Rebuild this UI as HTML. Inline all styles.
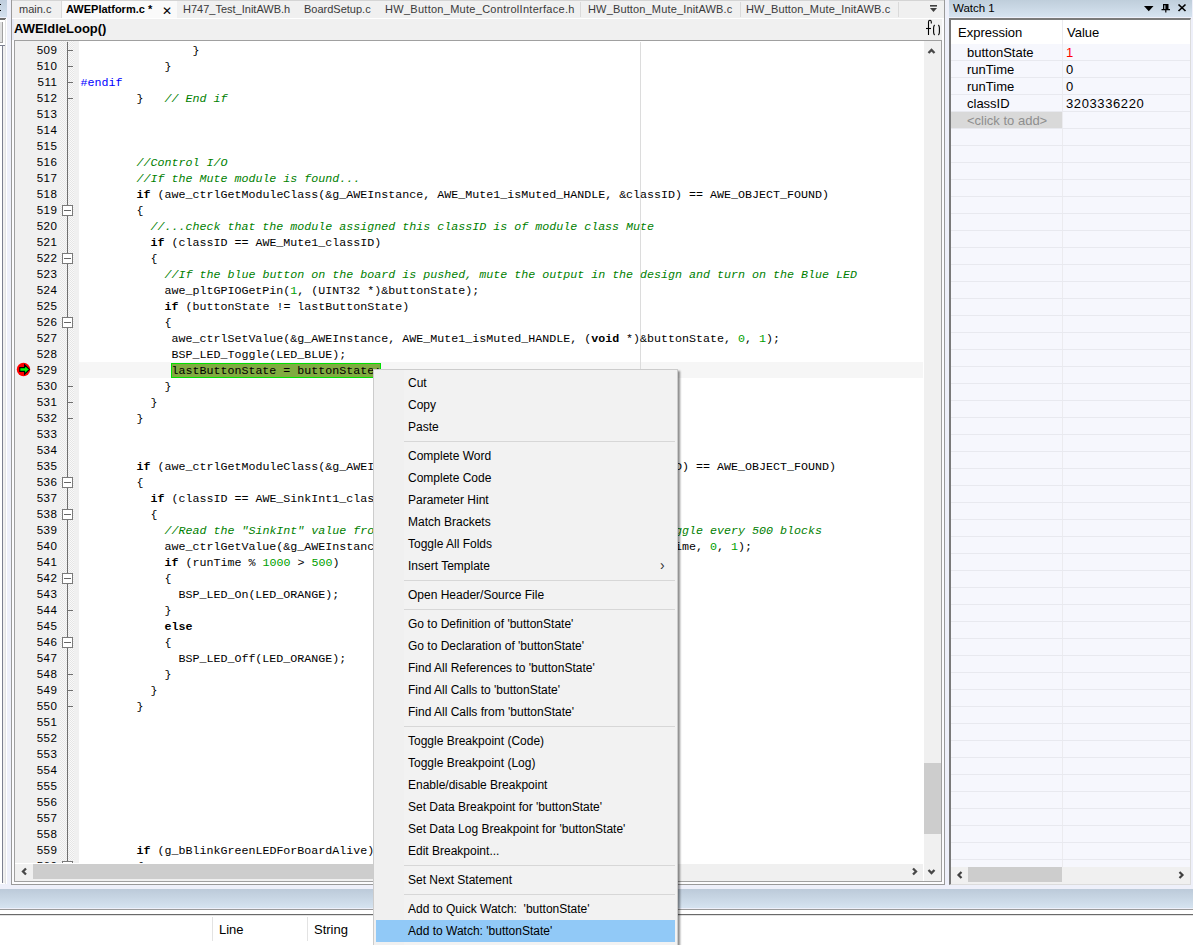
<!DOCTYPE html>
<html><head><meta charset="utf-8">
<style>
*{margin:0;padding:0;box-sizing:border-box}
html,body{width:1193px;height:945px;overflow:hidden;background:#eef0fa;font-family:"Liberation Sans",sans-serif;position:relative}
.a{position:absolute}
/* left strip */
#lhdr{left:0;top:0;width:7px;height:17px;background:linear-gradient(#bfcddd,#d3e0ee)}
#lpanel{left:0;top:18px;width:7px;height:866px;background:#fff}
#lline{left:0;top:18px;width:6px;height:2px;background:#6e6e6e}
#lbox{left:0;top:22px;width:3px;height:21px;background:#e0e0e0;border-right:1px solid #a0a0a0;border-bottom:1px solid #a0a0a0}
#lwhite{left:0;top:45px;width:6px;height:838px;background:#f0f0f0;border-top:1px solid #7c8090}
#lwhite:before{content:"";position:absolute;left:0;top:0;width:2px;height:837px;background:#fff}
#lwhite:after{content:"";position:absolute;left:2px;top:0;width:1px;height:837px;background:#7c8090}
#lborder{left:5px;top:19px;width:1px;height:865px;background:#e4e4e4}
/* editor frame */
#eframe{left:11px;top:0;width:934px;height:885px;background:#fcfcfe;border-left:1px solid #9a9a9a;border-bottom:1px solid #9a9a9a;border-right:1px solid #9a9a9a}
#tabbar{left:12px;top:0;width:932px;height:18px;background:#f0f0f0;border-top:1px solid #d4d4d4}
#tabsep{left:12px;top:18px;width:932px;height:1px;background:#fff}
.tab{top:1px;height:17px;font-size:11px;color:#3a3a3a;white-space:nowrap;line-height:17px}
#acttab{left:61px;top:1px;width:116px;height:17px;background:#fafafa;border-left:1px solid #dadada}
.tsep{top:2px;width:1px;height:15px;background:#dadada}
#funcbar{left:12px;top:19px;width:930px;height:21px;background:#f0f0f0;border-left:2px solid #e6e9f5}
#funcname{left:14px;top:21px;font-size:13px;font-weight:bold;color:#000;line-height:16px}
#ebox{left:14px;top:40px;width:928px;height:842px;border:1px solid #a0a0a0;background:#fff;overflow:hidden}
#gutter{left:0;top:0;width:64px;height:822px;background:#f0f0f0}
#foldm{left:45px;top:0;width:14px;height:822px;background:repeating-conic-gradient(#e6e6e6 0 25%,#f9f9f9 0 50%) 0 0/2px 2px}
#foldline{left:52px;top:1px;width:1px;height:821px;background:#6f6f6f}
.fb{left:47px;width:11px;height:11px;border:1px solid #7a7a7a;background:#fff}
.fb:after{content:"";position:absolute;left:1px;top:4px;width:7px;height:1px;background:#666}
.ft{left:53px;width:5px;height:1px;background:#6f6f6f}
#codearea{left:64px;top:1px;width:845px;height:821px;background:#fff;overflow:hidden}
#curline{left:0;top:320px;width:844px;height:16px;background:#f6f6f6}
#guide{left:561px;top:0;width:1px;height:822px;background:#dcdcdc}
.ln{position:absolute;left:1.5px;margin-top:1px;height:16px;white-space:pre;font-family:"Liberation Mono",monospace;font-size:11.67px;line-height:16px;color:#000}
.ln b{font-weight:bold}
.cm{color:#008000;font-style:italic}
.nm{color:#00a000}
.pp{color:#0000ff}
.hlt{}
#hlbox{left:92px;top:321px;width:210px;height:15px;background:#80ab40;border:1px solid #00e000}
.nu{position:absolute;left:0;width:42.5px;text-align:right;font-size:11.6px;letter-spacing:0.5px;line-height:16px;color:#000;height:16px;padding-top:0px}
#vscroll{left:909px;top:0;width:17px;height:840px;background:#f0f0f0}
#vthumb{left:909px;top:722px;width:17px;height:71px;background:#cdcdcd}
#hscroll{left:0;top:823px;width:908px;height:17px;background:#f0f0f0}
#hthumb{left:18px;top:823px;width:600px;height:15px;background:#cdcdcd}
#corner{left:909px;top:823px;width:17px;height:17px;background:#f0f0f0}
/* watch */
#whdr{left:949px;top:0;width:243px;height:17px;background:linear-gradient(#bfcedb,#d6e3f0)}
#wtitle{left:953px;top:1px;font-size:11.5px;line-height:15px;color:#000}
#wbox{left:949px;top:18px;width:242px;height:867px;border-left:2px solid #7a7a7a;border-top:2px solid #7a7a7a;border-right:1px solid #dcdcdc;border-bottom:1px solid #dcdcdc;background:#f6f7fd}
.wh{font-size:13px;color:#000;line-height:16px}
.wr{left:951px;width:239px;height:1px;background:#e8e9ef}
.wt{font-size:13px;line-height:16px;color:#000}
/* bottom */
#bbar{left:0;top:886px;width:1193px;height:3px;background:#eef0fa}
#bgrad{left:0;top:889px;width:1193px;height:19px;background:linear-gradient(#bccad9,#d5e3f0)}
#bl1{left:0;top:909px;width:1193px;height:1px;background:#9a9a9a}
#bl2{left:0;top:914px;width:1193px;height:1px;background:#6a6a6a}
#bwhite{left:0;top:910px;width:1193px;height:35px;background:#fff}
.bh{top:921.5px;font-size:13px;line-height:16px;color:#000}
.bsep{top:917px;width:1px;height:24px;background:#e3e3e3}
/* menu */
#menu{left:373px;top:369px;width:305px;height:590px;background:#f0f0f0;border:1px solid #cccccc;box-shadow:2px 2px 2px rgba(0,0,0,0.45)}
.mi{position:absolute;left:2px;width:299px;height:22px}
.mi.hi{background:#91c9f7}
.mt{position:absolute;left:32px;top:4px;font-size:12px;line-height:14px;color:#000;white-space:nowrap}
.sep{position:absolute;left:30px;width:271px;height:1px;background:#d7d7d7}
.arr{position:absolute;left:284px;top:2px;font-size:14px;color:#333}
</style></head><body>
<div class="a" id="lhdr"></div>
<div class="a" id="lpanel"></div>
<div class="a" style="left:0;top:4px;width:1px;height:1px;background:#000"></div>
<div class="a" style="left:0;top:10px;width:1px;height:1px;background:#000"></div>
<div class="a" id="lline"></div>
<div class="a" id="lbox"></div>
<div class="a" id="lwhite"></div>
<div class="a" id="lborder"></div>

<div class="a" id="eframe"></div>
<div class="a" id="tabbar"></div>
<div class="a" id="tabsep"></div>
<div class="a" id="acttab"></div>
<div class="a tab" style="left:19px">main.c</div>
<div class="a tab" style="left:66px;font-weight:bold;color:#000">AWEPlatform.c *</div>
<div class="a" style="left:162px;top:6px;font-size:12px;line-height:10px">&#x2715;</div>
<div class="a tab" style="left:183px">H747_Test_InitAWB.h</div>
<div class="a tab" style="left:304px">BoardSetup.c</div>
<div class="a tab" style="left:385px;letter-spacing:0.28px">HW_Button_Mute_ControlInterface.h</div>
<div class="a tsep" style="left:580px"></div>
<div class="a tab" style="left:588px;letter-spacing:0.15px">HW_Button_Mute_InitAWB.c</div>
<div class="a tsep" style="left:740px"></div>
<div class="a tab" style="left:746px;letter-spacing:0.15px">HW_Button_Mute_InitAWB.c</div>
<div class="a tsep" style="left:898px"></div>
<div class="a" id="funcbar"></div>
<div class="a" id="funcname">AWEIdleLoop()</div>
<svg class="a" style="left:920px;top:0" width="24" height="40" viewBox="0 0 24 40">
<path d="M10 5.8 H17" stroke="#404040" stroke-width="1.6"/>
<path d="M10 8 H17 L13.5 12 Z" fill="#404040"/>
<path d="M8.5 35 V22 Q8.5 20.3 10 20.3 Q11.3 20.3 11.3 22 V23.5" stroke="#000" stroke-width="1.1" fill="none"/>
<path d="M6 28.5 H11" stroke="#000" stroke-width="1.1"/>
<path d="M14.6 25 Q13.6 26 13.6 28 V32 Q13.6 34 14.6 35" stroke="#000" stroke-width="1.1" fill="none"/>
<path d="M18.4 25 Q19.4 26 19.4 28 V32 Q19.4 34 18.4 35" stroke="#000" stroke-width="1.1" fill="none"/>
</svg>

<div class="a" id="ebox">
 <div class="a" id="gutter"></div>
 <div class="a" id="foldm"></div>
 <div class="a" id="foldline"></div>
 <div class="a" style="left:0;top:1px;width:64px;height:821px;overflow:hidden">
<div class="nu" style="top:0px">509</div>
<div class="nu" style="top:16px">510</div>
<div class="nu" style="top:32px">511</div>
<div class="nu" style="top:48px">512</div>
<div class="nu" style="top:64px">513</div>
<div class="nu" style="top:80px">514</div>
<div class="nu" style="top:96px">515</div>
<div class="nu" style="top:112px">516</div>
<div class="nu" style="top:128px">517</div>
<div class="nu" style="top:144px">518</div>
<div class="nu" style="top:160px">519</div>
<div class="nu" style="top:176px">520</div>
<div class="nu" style="top:192px">521</div>
<div class="nu" style="top:208px">522</div>
<div class="nu" style="top:224px">523</div>
<div class="nu" style="top:240px">524</div>
<div class="nu" style="top:256px">525</div>
<div class="nu" style="top:272px">526</div>
<div class="nu" style="top:288px">527</div>
<div class="nu" style="top:304px">528</div>
<div class="nu" style="top:320px">529</div>
<div class="nu" style="top:336px">530</div>
<div class="nu" style="top:352px">531</div>
<div class="nu" style="top:368px">532</div>
<div class="nu" style="top:384px">533</div>
<div class="nu" style="top:400px">534</div>
<div class="nu" style="top:416px">535</div>
<div class="nu" style="top:432px">536</div>
<div class="nu" style="top:448px">537</div>
<div class="nu" style="top:464px">538</div>
<div class="nu" style="top:480px">539</div>
<div class="nu" style="top:496px">540</div>
<div class="nu" style="top:512px">541</div>
<div class="nu" style="top:528px">542</div>
<div class="nu" style="top:544px">543</div>
<div class="nu" style="top:560px">544</div>
<div class="nu" style="top:576px">545</div>
<div class="nu" style="top:592px">546</div>
<div class="nu" style="top:608px">547</div>
<div class="nu" style="top:624px">548</div>
<div class="nu" style="top:640px">549</div>
<div class="nu" style="top:656px">550</div>
<div class="nu" style="top:672px">551</div>
<div class="nu" style="top:688px">552</div>
<div class="nu" style="top:704px">553</div>
<div class="nu" style="top:720px">554</div>
<div class="nu" style="top:736px">555</div>
<div class="nu" style="top:752px">556</div>
<div class="nu" style="top:768px">557</div>
<div class="nu" style="top:784px">558</div>
<div class="nu" style="top:800px">559</div>
<div class="nu" style="top:816px">560</div>
 </div>
 <div class="a" style="left:0;top:1px;width:64px;height:821px;overflow:hidden">
<div class="a ft" style="top:8px"></div>
<div class="a ft" style="top:24px"></div>
<div class="a ft" style="top:40px"></div>
<div class="a ft" style="top:56px"></div>
<div class="a fb" style="top:163px"></div>
<div class="a fb" style="top:211px"></div>
<div class="a fb" style="top:275px"></div>
<div class="a ft" style="top:344px"></div>
<div class="a ft" style="top:360px"></div>
<div class="a ft" style="top:376px"></div>
<div class="a fb" style="top:435px"></div>
<div class="a fb" style="top:467px"></div>
<div class="a fb" style="top:531px"></div>
<div class="a ft" style="top:568px"></div>
<div class="a fb" style="top:595px"></div>
<div class="a ft" style="top:632px"></div>
<div class="a ft" style="top:648px"></div>
<div class="a ft" style="top:664px"></div>
<div class="a fb" style="top:819px"></div>
 </div>
 <div class="a" id="codearea">
  <div class="a" id="curline"></div>
  <div class="a" id="guide"></div>
  <div class="a" id="hlbox"></div>
<div class="ln" style="top:0px">                }</div>
<div class="ln" style="top:16px">            }</div>
<div class="ln" style="top:32px"><span class="pp">#endif</span></div>
<div class="ln" style="top:48px">        }   <span class="cm">// End if</span></div>
<div class="ln" style="top:64px"></div>
<div class="ln" style="top:80px"></div>
<div class="ln" style="top:96px"></div>
<div class="ln" style="top:112px">        <span class="cm">//Control I/O</span></div>
<div class="ln" style="top:128px">        <span class="cm">//If the Mute module is found...</span></div>
<div class="ln" style="top:144px">        <b>if</b> (awe_ctrlGetModuleClass(&amp;g_AWEInstance, AWE_Mute1_isMuted_HANDLE, &amp;classID) == AWE_OBJECT_FOUND)</div>
<div class="ln" style="top:160px">        {</div>
<div class="ln" style="top:176px">          <span class="cm">//...check that the module assigned this classID is of module class Mute</span></div>
<div class="ln" style="top:192px">          <b>if</b> (classID == AWE_Mute1_classID)</div>
<div class="ln" style="top:208px">          {</div>
<div class="ln" style="top:224px">            <span class="cm">//If the blue button on the board is pushed, mute the output in the design and turn on the Blue LED</span></div>
<div class="ln" style="top:240px">            awe_pltGPIOGetPin(<span class="nm">1</span>, (UINT32 *)&amp;buttonState);</div>
<div class="ln" style="top:256px">            <b>if</b> (buttonState != lastButtonState)</div>
<div class="ln" style="top:272px">            {</div>
<div class="ln" style="top:288px">             awe_ctrlSetValue(&amp;g_AWEInstance, AWE_Mute1_isMuted_HANDLE, (<b>void</b> *)&amp;buttonState, <span class="nm">0</span>, <span class="nm">1</span>);</div>
<div class="ln" style="top:304px">             BSP_LED_Toggle(LED_BLUE);</div>
<div class="ln" style="top:320px">             <span class="hlt">lastButtonState = buttonState;</span></div>
<div class="ln" style="top:336px">            }</div>
<div class="ln" style="top:352px">          }</div>
<div class="ln" style="top:368px">        }</div>
<div class="ln" style="top:384px"></div>
<div class="ln" style="top:400px"></div>
<div class="ln" style="top:416px">        <b>if</b> (awe_ctrlGetModuleClass(&amp;g_AWEInstance, AWE_SinkInt1_value_HANDLE, &amp;classID) == AWE_OBJECT_FOUND)</div>
<div class="ln" style="top:432px">        {</div>
<div class="ln" style="top:448px">          <b>if</b> (classID == AWE_SinkInt1_classID)</div>
<div class="ln" style="top:464px">          {</div>
<div class="ln" style="top:480px">            <span class="cm">//Read the &quot;SinkInt&quot; value from the design and if the button is held , toggle every 500 blocks</span></div>
<div class="ln" style="top:496px">            awe_ctrlGetValue(&amp;g_AWEInstance, AWE_SinkInt1_value_HANDLE, (<b>void</b> *)&amp;runTime, <span class="nm">0</span>, <span class="nm">1</span>);</div>
<div class="ln" style="top:512px">            <b>if</b> (runTime % <span class="nm">1000</span> &gt; <span class="nm">500</span>)</div>
<div class="ln" style="top:528px">            {</div>
<div class="ln" style="top:544px">              BSP_LED_On(LED_ORANGE);</div>
<div class="ln" style="top:560px">            }</div>
<div class="ln" style="top:576px">            <b>else</b></div>
<div class="ln" style="top:592px">            {</div>
<div class="ln" style="top:608px">              BSP_LED_Off(LED_ORANGE);</div>
<div class="ln" style="top:624px">            }</div>
<div class="ln" style="top:640px">          }</div>
<div class="ln" style="top:656px">        }</div>
<div class="ln" style="top:672px"></div>
<div class="ln" style="top:688px"></div>
<div class="ln" style="top:704px"></div>
<div class="ln" style="top:720px"></div>
<div class="ln" style="top:736px"></div>
<div class="ln" style="top:752px"></div>
<div class="ln" style="top:768px"></div>
<div class="ln" style="top:784px"></div>
<div class="ln" style="top:800px">        <b>if</b> (g_bBlinkGreenLEDForBoardAlive)</div>
<div class="ln" style="top:816px">        {</div>
 </div>
 <div class="a" id="vscroll"></div>
 <div class="a" id="vthumb"></div>
 <div class="a" id="hscroll"></div>
 <div class="a" id="hthumb"></div>

 <svg class="a" style="left:909px;top:0" width="17" height="840" viewBox="0 0 17 840">
 <path d="M4.5 12 L7.5 9 L10.5 12" stroke="#484848" stroke-width="2.3" fill="none"/>
 <path d="M4.5 829 L7.5 832 L10.5 829" stroke="#484848" stroke-width="2.3" fill="none"/>
 </svg>
 <svg class="a" style="left:0;top:823px" width="909" height="17" viewBox="0 0 909 17">
 <path d="M11 4.5 L8 7.5 L11 10.5" stroke="#484848" stroke-width="2.3" fill="none"/>
 <path d="M898 4.5 L901 7.5 L898 10.5" stroke="#484848" stroke-width="2.3" fill="none"/>
 </svg>
</div>
<!-- breakpoint icon -->
<svg class="a" style="left:16px;top:362px" width="16" height="16" viewBox="0 0 16 16">
<circle cx="7.5" cy="7.5" r="6.7" fill="#ff0000"/>
<path d="M3.8 5.6 H8.6 V2.8 L13.4 7.5 L8.6 12.2 V9.4 H3.8 Z" fill="#00ff00" stroke="#000" stroke-width="1.1" stroke-linejoin="miter"/>
</svg>

<div class="a" id="whdr"></div>
<div class="a" id="wtitle">Watch 1</div>
<div class="a" id="wbox"></div>
<div class="a" style="left:951px;top:20px;width:239px;height:24px;background:#fff"></div>
<div class="a" style="left:1062px;top:20px;width:1px;height:847px;background:#ebebef"></div>
<div class="a wh" style="left:958px;top:25px">Expression</div>
<div class="a wh" style="left:1067px;top:25px">Value</div>


<div class="a wr" style="top:60px"></div>
<div class="a wr" style="top:77px"></div>
<div class="a wr" style="top:94px"></div>
<div class="a wr" style="top:111px"></div>
<div class="a" style="left:951px;top:112px;width:111px;height:16px;background:#d9d9d9"></div>
<div class="a wr" style="top:128px"></div>
<div class="a wr" style="top:145px"></div>
<div class="a wr" style="top:162px"></div>
<div class="a wr" style="top:179px"></div>
<div class="a wr" style="top:196px"></div>
<div class="a wr" style="top:213px"></div>
<div class="a wr" style="top:230px"></div>
<div class="a wr" style="top:247px"></div>
<div class="a wr" style="top:264px"></div>
<div class="a wr" style="top:281px"></div>
<div class="a wr" style="top:298px"></div>
<div class="a wr" style="top:315px"></div>
<div class="a wr" style="top:332px"></div>
<div class="a wr" style="top:349px"></div>
<div class="a wr" style="top:366px"></div>
<div class="a wr" style="top:383px"></div>
<div class="a wr" style="top:400px"></div>
<div class="a wr" style="top:417px"></div>
<div class="a wr" style="top:434px"></div>
<div class="a wr" style="top:451px"></div>
<div class="a wr" style="top:468px"></div>
<div class="a wr" style="top:485px"></div>
<div class="a wr" style="top:502px"></div>
<div class="a wr" style="top:519px"></div>
<div class="a wr" style="top:536px"></div>
<div class="a wr" style="top:553px"></div>
<div class="a wr" style="top:570px"></div>
<div class="a wr" style="top:587px"></div>
<div class="a wr" style="top:604px"></div>
<div class="a wr" style="top:621px"></div>
<div class="a wr" style="top:638px"></div>
<div class="a wr" style="top:655px"></div>
<div class="a wr" style="top:672px"></div>
<div class="a wr" style="top:689px"></div>
<div class="a wr" style="top:706px"></div>
<div class="a wr" style="top:723px"></div>
<div class="a wr" style="top:740px"></div>
<div class="a wr" style="top:757px"></div>
<div class="a wr" style="top:774px"></div>
<div class="a wr" style="top:791px"></div>
<div class="a wr" style="top:808px"></div>
<div class="a wr" style="top:825px"></div>
<div class="a wr" style="top:842px"></div>
<div class="a wr" style="top:859px"></div>
<div class="a wt" style="left:967px;top:45px">buttonState</div>
<div class="a wt" style="left:1066px;top:45px;color:#ff0000">1</div>
<div class="a wt" style="left:967px;top:62px">runTime</div>
<div class="a wt" style="left:1066px;top:62px">0</div>
<div class="a wt" style="left:967px;top:79px">runTime</div>
<div class="a wt" style="left:1066px;top:79px">0</div>
<div class="a wt" style="left:967px;top:96px">classID</div>
<div class="a wt" style="left:1066px;top:96px;letter-spacing:0.6px">3203336220</div>
<div class="a wt" style="left:967px;top:113px;color:#8e8e8e">&lt;click to add&gt;</div>
<!-- watch header icons -->
<svg class="a" style="left:1140px;top:0px" width="50" height="16" viewBox="0 0 50 16">
<path d="M4 6 H13.5 L8.75 11.2 Z" fill="#000"/>
<path d="M23 4 H28.5 V9 H30 V10.2 H26.4 V12.5 H25.2 V10.2 H21.5 V9 H23 Z M24.3 5.2 V9 H25.4 V5.2 Z" fill="#000"/>
<path d="M38.5 4.5 L45.5 11 M45.5 4.5 L38.5 11" stroke="#000" stroke-width="1.7"/>
</svg>
<!-- watch scrollbar -->
<div class="a" style="left:951px;top:867px;width:239px;height:17px;background:#f0f0f0"></div>
<div class="a" style="left:968px;top:867px;width:94px;height:15px;background:#cdcdcd"></div>
<svg class="a" style="left:951px;top:867px" width="240" height="17" viewBox="0 0 240 17">
<path d="M10.5 5 L7.5 8 L10.5 11" stroke="#404040" stroke-width="2.2" fill="none"/>
<path d="M228.5 5 L231.5 8 L228.5 11" stroke="#404040" stroke-width="2.2" fill="none"/>
</svg>

<div class="a" id="bbar"></div>
<div class="a" id="bgrad"></div>
<div class="a" id="bl1"></div>
<div class="a" id="bwhite"></div>
<div class="a" id="bl2"></div>
<div class="a" style="left:0;top:915px;width:1193px;height:1px;background:#e2e2e2"></div>
<div class="a bsep" style="left:212px"></div>
<div class="a bsep" style="left:307px"></div>
<div class="a bh" style="left:219px">Line</div>
<div class="a bh" style="left:314px">String</div>

<div class="a" id="menu">
<div class="a" style="left:30px;top:0;width:273px;height:600px;background:#f2f2f2"></div>
<div class="mi" style="top:2px"><span class="mt">Cut</span></div>
<div class="mi" style="top:24px"><span class="mt">Copy</span></div>
<div class="mi" style="top:46px"><span class="mt">Paste</span></div>
<div class="sep" style="top:71px"></div>
<div class="mi" style="top:75px"><span class="mt">Complete Word</span></div>
<div class="mi" style="top:97px"><span class="mt">Complete Code</span></div>
<div class="mi" style="top:119px"><span class="mt">Parameter Hint</span></div>
<div class="mi" style="top:141px"><span class="mt">Match Brackets</span></div>
<div class="mi" style="top:163px"><span class="mt">Toggle All Folds</span></div>
<div class="mi" style="top:185px"><span class="mt">Insert Template</span><span class="arr">&#x203A;</span></div>
<div class="sep" style="top:210px"></div>
<div class="mi" style="top:214px"><span class="mt">Open Header/Source File</span></div>
<div class="sep" style="top:239px"></div>
<div class="mi" style="top:243px"><span class="mt">Go to Definition of 'buttonState'</span></div>
<div class="mi" style="top:265px"><span class="mt">Go to Declaration of 'buttonState'</span></div>
<div class="mi" style="top:287px"><span class="mt">Find All References to 'buttonState'</span></div>
<div class="mi" style="top:309px"><span class="mt">Find All Calls to 'buttonState'</span></div>
<div class="mi" style="top:331px"><span class="mt">Find All Calls from 'buttonState'</span></div>
<div class="sep" style="top:356px"></div>
<div class="mi" style="top:360px"><span class="mt">Toggle Breakpoint (Code)</span></div>
<div class="mi" style="top:382px"><span class="mt">Toggle Breakpoint (Log)</span></div>
<div class="mi" style="top:404px"><span class="mt">Enable/disable Breakpoint</span></div>
<div class="mi" style="top:426px"><span class="mt">Set Data Breakpoint for 'buttonState'</span></div>
<div class="mi" style="top:448px"><span class="mt">Set Data Log Breakpoint for 'buttonState'</span></div>
<div class="mi" style="top:470px"><span class="mt">Edit Breakpoint...</span></div>
<div class="sep" style="top:495px"></div>
<div class="mi" style="top:499px"><span class="mt">Set Next Statement</span></div>
<div class="sep" style="top:524px"></div>
<div class="mi" style="top:528px"><span class="mt">Add to Quick Watch:&nbsp; 'buttonState'</span></div>
<div class="mi hi" style="top:550px"><span class="mt">Add to Watch: 'buttonState'</span></div>
</div>
</body></html>
